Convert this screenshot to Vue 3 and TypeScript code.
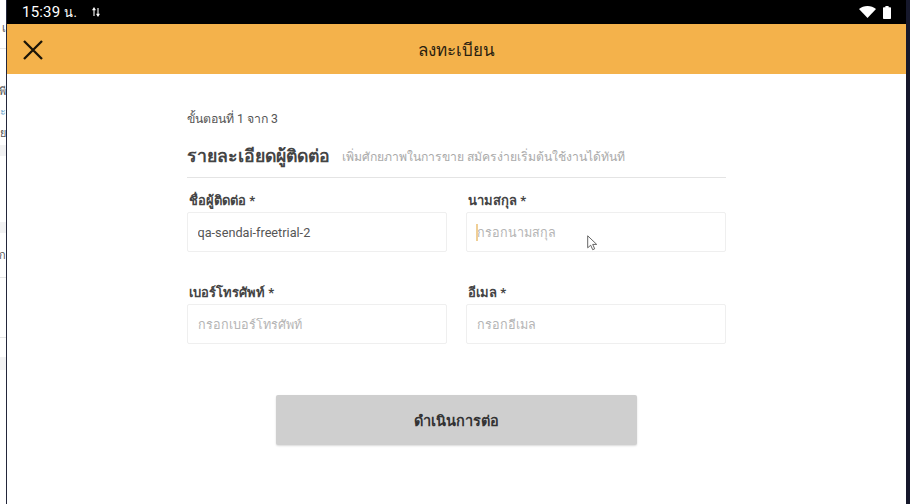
<template>
  <div class="desktop">
    <div class="behind">
      <div
        v-for="(seg, i) in behindRows"
        :key="i"
        class="behind__row"
        :class="seg.kind"
        :style="{ height: seg.h + 'px' }"
      >{{ seg.text }}</div>
    </div>

    <div class="screen">
      <div class="status">
        <span class="status__time">15:39 <small>น.</small></span>
        <svg class="status__sync" width="8" height="10" viewBox="0 0 8 10">
          <path d="M2 9V2M.6 3.2 2 1l1.4 2.2M6 1v7M4.6 6.8 6 9l1.4-2.2" fill="none" stroke="#fff" stroke-width="1.1" />
        </svg>
        <svg class="status__wifi" width="17" height="12" viewBox="0 0 17 12">
          <path d="M0 3C2.4 1 5.2 0 8.5 0s6.1 1 8.5 3L8.5 12z" fill="#fff" />
        </svg>
        <svg class="status__battery" width="8" height="13" viewBox="0 0 8 13">
          <path d="M2.4 0h3.2v1.2H7.2a.8.8 0 0 1 .8.8v10.2a.8.8 0 0 1-.8.8H.8a.8.8 0 0 1-.8-.8V2a.8.8 0 0 1 .8-.8h1.6z" fill="#fff" />
        </svg>
      </div>

      <header class="appbar">
        <svg class="appbar__close" width="20" height="20" viewBox="0 0 20 20">
          <path d="M1 1l18 18M19 1 1 19" stroke="#1b1407" stroke-width="2.3" fill="none" />
        </svg>
        <h1 class="appbar__title">ลงทะเบียน</h1>
      </header>

      <main class="content">
        <div class="form">
          <p class="step">ขั้นตอนที่ 1 จาก 3</p>
          <div class="form__head">
            <h2>รายละเอียดผู้ติดต่อ</h2>
            <span>เพิ่มศักยภาพในการขาย สมัครง่ายเริ่มต้นใช้งานได้ทันที</span>
          </div>
          <div class="form__grid">
            <div v-for="f in fields" :key="f.label" class="field">
              <label>{{ f.label }} *</label>
              <div class="field__box">
                <input type="text" :value="f.value" :placeholder="f.placeholder" />
                <template v-if="f.focused">
                  <i class="field__caret"></i>
                  <svg class="field__pointer" width="11" height="16" viewBox="0 0 11 16">
                    <path d="M.7.8v12l3-2.6 2 4.5 2-.9-2-4.4h4z" fill="#fff" stroke="#555" stroke-width=".9" />
                  </svg>
                </template>
              </div>
            </div>
          </div>
        </div>
        <button class="submit" type="button">ดำเนินการต่อ</button>
      </main>
    </div>

    <div class="edge"></div>
  </div>
</template>

<script setup lang="ts">
interface Field {
  label: string
  placeholder: string
  value?: string
  focused?: boolean
}

const fields: Field[] = [
  { label: 'ชื่อผู้ติดต่อ', placeholder: 'กรอกชื่อผู้ติดต่อ', value: 'qa-sendai-freetrial-2' },
  { label: 'นามสกุล', placeholder: 'กรอกนามสกุล', focused: true },
  { label: 'เบอร์โทรศัพท์', placeholder: 'กรอกเบอร์โทรศัพท์' },
  { label: 'อีเมล', placeholder: 'กรอกอีเมล' }
]

// slivers of the window that sits behind the emulator
const behindRows = [
  { h: 21, kind: '', text: '' },
  { h: 14, kind: 'txt', text: 'เ' },
  { h: 13, kind: '', text: '' },
  { h: 1, kind: 'line', text: '' },
  { h: 35, kind: '', text: '' },
  { h: 13, kind: 'txt', text: 'พี' },
  { h: 7, kind: '', text: '' },
  { h: 13, kind: 'txt blue', text: 'ะ' },
  { h: 9, kind: '', text: '' },
  { h: 13, kind: 'txt', text: 'ย' },
  { h: 6, kind: '', text: '' },
  { h: 11, kind: 'grey', text: '' },
  { h: 66, kind: '', text: '' },
  { h: 11, kind: 'grey', text: '' },
  { h: 15, kind: '', text: '' },
  { h: 13, kind: 'txt', text: 'ก' },
  { h: 16, kind: '', text: '' },
  { h: 1, kind: 'line', text: '' },
  { h: 59, kind: '', text: '' },
  { h: 1, kind: 'line', text: '' },
  { h: 19, kind: '', text: '' },
  { h: 13, kind: 'grey', text: '' }
]
</script>

<style scoped>
.desktop {
  display: flex;
  width: 910px;
  height: 504px;
  overflow: hidden;
  background: #fff;
  font-family: Roboto, "Noto Sans", sans-serif;
}
.behind {
  width: 6px;
  flex: none;
  overflow: hidden;
  border-right: 1px solid #23263a;
  box-sizing: content-box;
}
.behind__row {
  display: flex;
  justify-content: flex-end;
  align-items: center;
  font-size: 11px;
  color: #555;
  white-space: nowrap;
}
.behind__row.blue {
  color: #6fa8cc;
}
.behind__row.grey {
  background: #f2f2f3;
}
.behind__row.line {
  background: #e6e6e6;
}
.screen {
  flex: 1;
  min-width: 0;
  display: flex;
  flex-direction: column;
}
.edge {
  width: 4px;
  flex: none;
  background: #16182b;
}
.status {
  height: 24px;
  flex: none;
  display: flex;
  align-items: center;
  padding: 0 15px;
  background: #000;
  color: #fff;
}
.status__time {
  font-size: 15px;
  letter-spacing: 0.2px;
}
.status__time small {
  font-size: 13px;
}
.status__sync {
  margin-left: 15px;
}
.status__wifi {
  margin-left: auto;
}
.status__battery {
  margin-left: 7px;
}
.appbar {
  position: relative;
  height: 50px;
  flex: none;
  display: flex;
  align-items: center;
  justify-content: center;
  background: #f4b24b;
}
.appbar__close {
  position: absolute;
  left: 16px;
  top: 16px;
}
.appbar__title {
  margin: 0;
  font-size: 17px;
  font-weight: 400;
  color: #2a2110;
}
.content {
  flex: 1;
  display: flex;
  flex-direction: column;
  align-items: center;
  padding-top: 36px;
}
.form {
  width: 539px;
}
.step {
  margin: 0 0 15px;
  font-size: 12.3px;
  line-height: 18px;
  color: #555;
}
.form__head {
  display: flex;
  align-items: center;
  gap: 12px;
  height: 26px;
  padding-bottom: 8px;
  border-bottom: 1px solid #e4e4e4;
}
.form__head h2 {
  margin: 0;
  font-size: 17.7px;
  font-weight: 700;
  color: #444;
}
.form__head span {
  font-size: 12.2px;
  color: #aaa;
}
.form__grid {
  display: grid;
  grid-template-columns: 260px 260px;
  column-gap: 19px;
  row-gap: 32px;
  margin-top: 14px;
}
.field label {
  display: block;
  height: 20px;
  line-height: 18px;
  padding-left: 2px;
  font-size: 13px;
  font-weight: 700;
  color: #444;
}
.field__box {
  position: relative;
  height: 40px;
}
.field__box input {
  box-sizing: border-box;
  width: 100%;
  height: 100%;
  padding: 0 9.5px;
  border: 1px solid #efefef;
  border-radius: 2px;
  outline: none;
  font-family: inherit;
  font-size: 12.7px;
  color: #555;
  background: #fff;
}
.field__box input::placeholder {
  font-size: 12.6px;
  color: #b5b5b5;
  opacity: 1;
}
.field__caret {
  position: absolute;
  left: 10px;
  top: 12px;
  width: 2px;
  height: 17px;
  background: #f0cf96;
}
.field__pointer {
  position: absolute;
  left: 121px;
  top: 23px;
}
.submit {
  width: 361px;
  height: 50px;
  margin-top: 51px;
  border: none;
  border-radius: 2px;
  background: #cfcfcf;
  box-shadow: 0 1px 2px rgba(0, 0, 0, 0.15);
  font-family: inherit;
  font-size: 14.5px;
  font-weight: 700;
  color: #333;
}
</style>
